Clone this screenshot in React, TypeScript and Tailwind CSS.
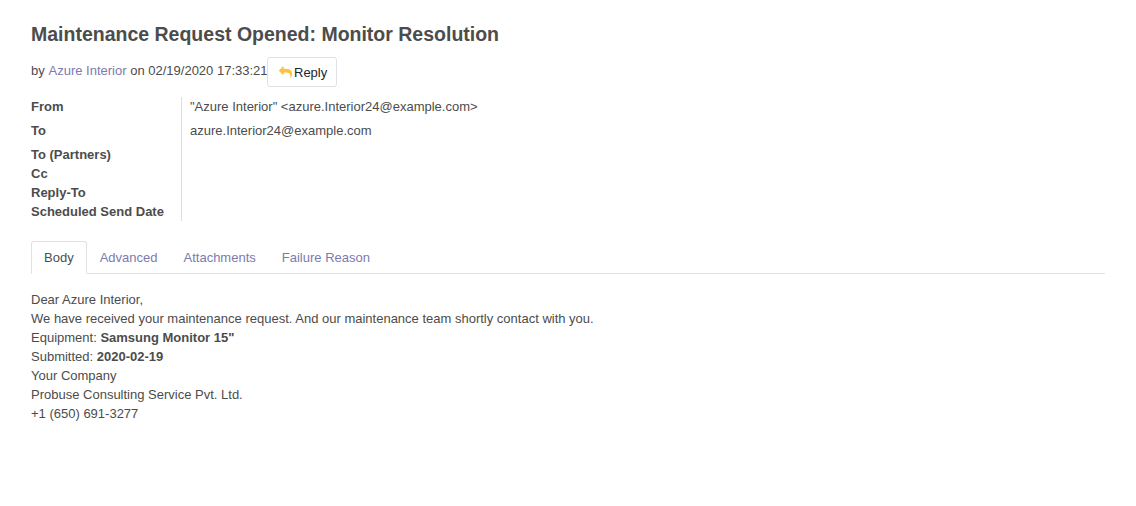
import React from "react";

const fields: { label: string; value?: string; tall?: boolean }[] = [
  { label: "From", value: '"Azure Interior" <azure.Interior24@example.com>', tall: true },
  { label: "To", value: "azure.Interior24@example.com", tall: true },
  { label: "To (Partners)" },
  { label: "Cc" },
  { label: "Reply-To" },
  { label: "Scheduled Send Date" },
];

const tabs = ["Advanced", "Attachments", "Failure Reason"];

function ReplyIcon() {
  return (
    <svg viewBox="0 0 1792 1792" fill="currentColor" className="mr-[2px] size-[13px] shrink-0 text-[#ffc13f]">
      <path d="M1792 1120q0 166-127 451-3 7-10.5 24t-13.5 30-13 22q-12 17-28 17-15 0-23.5-10t-8.5-25q0-9 2.5-26.5t2.5-23.5q5-68 5-123 0-101-17.5-181t-48.5-138.5-80-101-105.5-69.5-133-42.5-154-21.5-175.5-6h-224v256q0 26-19 45t-45 19-45-19l-512-512q-19-19-19-45t19-45l512-512q19-19 45-19t45 19 19 45v256h224q713 0 875 403 53 134 53 333z" />
    </svg>
  );
}

export default function App() {
  return (
    <main className="h-[506px] overflow-hidden bg-white px-[31px] pt-[22px] font-['Liberation_Sans',Arial,sans-serif] text-[13px] leading-[19px] text-[#4c4c4c]">
      <h1 className="text-[19.5px] leading-6 font-bold">Maintenance Request Opened: Monitor Resolution</h1>
      <div className="mt-[11px] flex h-[30px] items-start">
        <span className="mt-1 w-[236px] whitespace-pre">
          by <a className="ml-[0.2px] text-[#7c7bad]">Azure Interior</a> on 02/19/2020 17:33:21
        </span>
        <button className="flex h-[30px] w-[70px] items-center rounded-[3px] border border-[#dee2e6] pl-[11px] text-[#212529]">
          <ReplyIcon />
          Reply
        </button>
      </div>
      <dl className="mt-[10px]">
        {fields.map((f) => (
          <div key={f.label} className={f.tall ? "flex h-6" : "flex h-[19px]"}>
            <dt className="w-[151px] border-r border-[#ddd] font-bold">{f.label}</dt>
            <dd className="pl-2">{f.value}</dd>
          </div>
        ))}
      </dl>
      <nav className="mt-[20px] flex h-[33px] border-b border-[#dee2e6]">
        <a className="h-[33px] w-[55.7px] rounded-t-[3px] border border-[#dee2e6] border-b-white bg-white pt-[6px] pl-3 text-[#495057]">Body</a>
        {tabs.map((t) => (
          <a key={t} className="px-[13px] pt-[7px] text-[#7c7bad]">{t}</a>
        ))}
      </nav>
      <section className="mt-4">
        <p>Dear Azure Interior,</p>
        <p>We have received your maintenance request. And our maintenance team shortly contact with you.</p>
        <p>Equipment: <b>Samsung Monitor 15"</b></p>
        <p>Submitted: <b>2020-02-19</b></p>
        <p>Your Company</p>
        <p>Probuse Consulting Service Pvt. Ltd.</p>
        <p>+1 (650) 691-3277</p>
      </section>
    </main>
  );
}
